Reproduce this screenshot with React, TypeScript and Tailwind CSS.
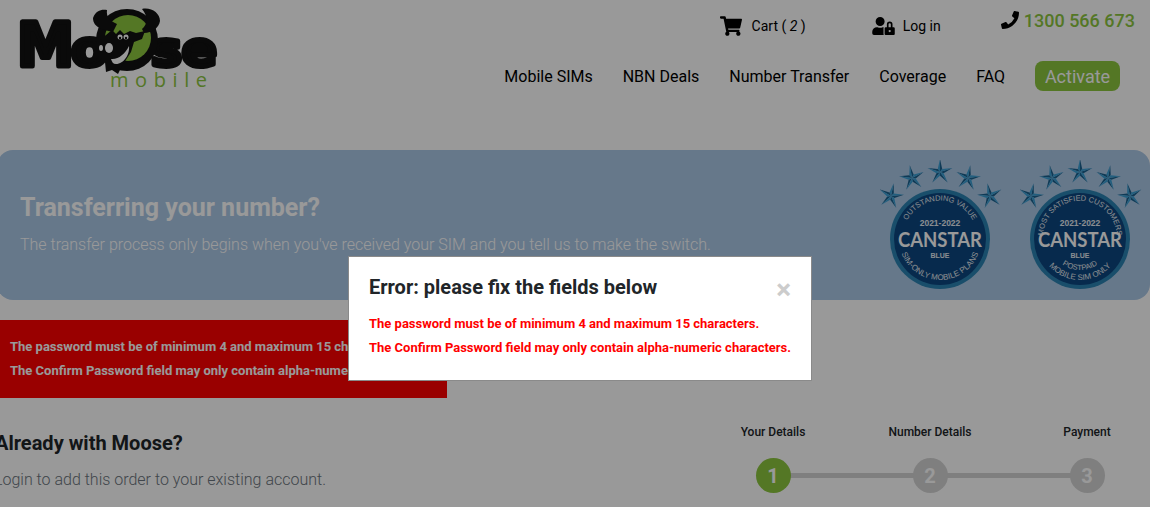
import { FaShoppingCart, FaUserLock, FaPhoneAlt } from 'react-icons/fa';

const MooseLogo = () => (
  <svg width="222" height="92" viewBox="0 0 222 92">
    {/* svg sits at x=14 y=4 on the page */}
    <g fontFamily="DejaVu Sans" fontWeight="700" fill="#111" stroke="#111" strokeWidth="5" strokeLinejoin="round">
      <text x="3" y="62" fontSize="60" textLength="57" lengthAdjust="spacingAndGlyphs">M</text>
      <text x="57" y="62" fontSize="50" textLength="37" lengthAdjust="spacingAndGlyphs">o</text>
      <text x="137" y="62" fontSize="48" textLength="66" lengthAdjust="spacingAndGlyphs">se</text>
    </g>
    {/* moose head */}
    <circle cx="113" cy="36" r="31" fill="#111" />
    <circle cx="114" cy="34" r="23" fill="#8cc63f" />
    <path d="M99 28 C90 26 79 24 79 14 C82 6 88 5 93 6 C92 13 96 17 103 20 Z" fill="#111" />
    <path d="M128 25 C134 20 134 12 128 5 C137 3 146 9 146 17 C145 24 138 29 130 29 Z" fill="#111" />
    <path d="M92 31 L98 26 L102 30 L106 26 L110 30 L116 27 L122 29 L131 27 L128 35 L120 38 L117 48 L108 62 L104 70 L98 66 L92 68 L91 58 L81 50 L81 40 Z" fill="#111" />
    <ellipse cx="87" cy="44" rx="2" ry="3" fill="#fff" />
    <ellipse cx="95" cy="44" rx="4" ry="5" fill="#fff" />
    <circle cx="106" cy="33" r="2.5" fill="#fff" />
    <circle cx="112" cy="33" r="2.5" fill="#fff" />
    <circle cx="106" cy="34" r="1.2" fill="#111" />
    <circle cx="112" cy="34" r="1.2" fill="#111" />
    <path d="M97 55 C104 56 111 50 115 42 C116 50 110 60 102 60 C99 60 98 58 97 55 Z" fill="#fff" />
    <text x="96" y="83" fontFamily="Open Sans" fontSize="20" textLength="97" fill="#8cc63f">mobile</text>
  </svg>
);

// five-pointed star built from light and dark facets
const Star = ({ x, y, rot }: { x: number; y: number; rot: number }) => {
  const pt = (r: number, a: number) => `${(r * Math.sin(a)).toFixed(2)} ${(-r * Math.cos(a)).toFixed(2)}`;
  const tips = [0, 1, 2, 3, 4];
  const step = (Math.PI * 2) / 5;
  return (
    <g transform={`translate(${x} ${y}) rotate(${rot})`}>
      {tips.map(i => (
        <g key={i}>
          <path d={`M0 0 L${pt(13, i * step)} L${pt(3.8, i * step + step / 2)} Z`} fill="#1a628f" />
          <path d={`M0 0 L${pt(13, i * step)} L${pt(3.8, i * step - step / 2)} Z`} fill="#3a9fd4" />
        </g>
      ))}
    </g>
  );
};

const Badge = ({ id, top, bottom, postpaid }: { id: string; top: string; bottom: string; postpaid?: boolean }) => (
  <svg width="122" height="130" viewBox="0 0 122 130">
    <Star x={11} y={36} rot={12} />
    <Star x={32} y={18} rot={-10} />
    <Star x={60} y={12} rot={0} />
    <Star x={88} y={18} rot={10} />
    <Star x={110} y={36} rot={-12} />
    <circle cx="60" cy="79" r="50" fill="#2b83b2" />
    <circle cx="60" cy="79" r="46" fill="#0d4680" />
    <defs>
      <path id={`${id}-t`} d="M25.5 91 A37 37 0 1 1 94.5 91" />
      <path id={`${id}-b`} d="M19 79 A41 41 0 0 0 101 79" />
      <path id={`${id}-c`} d="M29 79 A31 31 0 0 0 91 79" />
    </defs>
    <g fontFamily="Liberation Sans" fill="#e6ecf2">
      <text fontSize="7.5">
        <textPath href={`#${id}-t`} startOffset="50%" textAnchor="middle">{top}</textPath>
      </text>
      <text x="60" y="66" fontSize="8.5" fontWeight="700" textAnchor="middle">2021-2022</text>
      <text x="60" y="87" fontFamily="Lato" fontSize="20" fontWeight="700" textAnchor="middle" fill="#ffffff" textLength="84" lengthAdjust="spacingAndGlyphs">CANSTAR</text>
      <text x="60" y="98" fontSize="7" fontWeight="700" textAnchor="middle">BLUE</text>
      {postpaid && (
        <text fontSize="7.5">
          <textPath href={`#${id}-c`} startOffset="50%" textAnchor="middle">POSTPAID</textPath>
        </text>
      )}
      <text fontSize="8">
        <textPath href={`#${id}-b`} startOffset="50%" textAnchor="middle">{bottom}</textPath>
      </text>
    </g>
  </svg>
);

const navItems = ['Mobile SIMs', 'NBN Deals', 'Number Transfer', 'Coverage', 'FAQ'];

const steps = [
  { n: 1, label: 'Your Details', active: true },
  { n: 2, label: 'Number Details' },
  { n: 3, label: 'Payment' },
];

const errors = [
  'The password must be of minimum 4 and maximum 15 characters.',
  'The Confirm Password field may only contain alpha-numeric characters.',
];

export default function App() {
  return (
    <div className="relative h-[507px] w-[1150px] overflow-hidden bg-white font-['Roboto',sans-serif] text-[#212529]">
      <header className="flex h-[150px] items-start justify-between">
        <div className="ml-[14px] mt-[4px]">
          <MooseLogo />
        </div>
        <div className="mr-[15px] flex flex-col items-end">
          <div className="flex h-[46px] items-start">
            <div className="mt-[14px] flex items-center text-black">
              <FaShoppingCart className="h-[20px] w-[22px]" />
              <span className="ml-[10px] pt-[2px] text-[14px]">
                Cart ( <span className="italic">2</span> )
              </span>
            </div>
            <div className="ml-[66px] mt-[14px] flex items-center text-black">
              <FaUserLock className="h-[18px] w-[23px]" />
              <span className="ml-[8px] pt-[2px] text-[14px]">Log in</span>
            </div>
            <div className="ml-[60px] mt-[7px] flex items-center">
              <FaPhoneAlt className="h-[18px] w-[18px] -translate-y-[1px] -scale-x-100 text-black" />
              <span className="ml-[5px] text-[18px] font-medium text-[#8cc63f]">1300 566 673</span>
            </div>
          </div>
          <nav className="mr-[15px] mt-[15px] flex items-center gap-[30px] text-[16px] text-black">
            {navItems.map(item => (
              <a key={item} className="pt-[2px]">{item}</a>
            ))}
            <a className="flex h-[30px] w-[85px] items-center justify-center rounded-[8px] bg-[#8cc63f] text-[18px] text-white">
              Activate
            </a>
          </nav>
        </div>
      </header>

      <section className="-ml-[3px] flex h-[150px] items-center justify-between rounded-[16px] bg-[#abc8e6]">
        <div className="ml-[23px]">
          <h2 className="text-[25px] font-bold leading-[29px] text-white">Transferring your number?</h2>
          <p className="mt-[11px] text-[16px] font-light leading-[24px] text-white">
            The transfer process only begins when you've received your SIM and you tell us to make the switch.
          </p>
        </div>
        <div className="mr-[8px] flex gap-[18px]">
          <Badge id="a" top="OUTSTANDING VALUE" bottom="SIM-ONLY MOBILE PLANS" />
          <Badge id="b" top="MOST SATISFIED CUSTOMERS" bottom="MOBILE SIM ONLY" postpaid />
        </div>
      </section>

      <div className="mt-[20px] flex h-[78px] w-[447px] flex-col justify-center gap-[6px] bg-[#ff0000] pl-[10px] text-[13px] font-bold leading-[18px] text-white">
        {errors.map(e => (
          <p key={e} className="whitespace-nowrap">{e}</p>
        ))}
      </div>

      <div className="flex items-start justify-between">
        <div className="-ml-[6px] mt-[33px]">
          <h3 className="ml-[1px] text-[20px] font-bold leading-[24px] text-[#212529]">Already with Moose?</h3>
          <p className="mt-[13px] text-[16px] font-light leading-[24px] text-[#6c757d]">Login to add this order to your existing account.</p>
        </div>
        <div className="relative mr-[45px] mt-[26px] flex w-[350px] justify-between">
          <div className="absolute left-[18px] right-[18px] top-[49px] h-[5px] bg-[#d4d4d4]" />
          {steps.map(s => (
            <div key={s.n} className="relative flex w-[36px] flex-col items-center">
              <span className="whitespace-nowrap text-[12px] font-medium leading-[16px]">{s.label}</span>
              <span
                className={
                  s.active
                    ? 'mt-[18px] flex h-[35px] w-[35px] items-center justify-center rounded-full bg-[#8cc63f] text-[20px] font-bold text-white'
                    : 'mt-[18px] flex h-[35px] w-[35px] items-center justify-center rounded-full bg-[#d4d4d4] text-[20px] font-bold text-white'
                }
              >
                {s.n}
              </span>
            </div>
          ))}
        </div>
      </div>

      {/* modal backdrop */}
      <div className="absolute inset-0 bg-black/40" />
      <div className="absolute left-[348px] top-[256px] h-[125px] w-[464px] border border-[#8a8a8a] bg-white pl-[20px] pt-[16px]">
        <div className="flex items-start justify-between pr-[20px]">
          <h4 className="text-[20px] font-bold leading-[28px] text-[#212529]">Error: please fix the fields below</h4>
          <span className="mt-[3px] text-[28px] font-bold leading-[28px] text-[#cccccc]">×</span>
        </div>
        <div className="mt-[11px] flex flex-col gap-[6px] text-[13px] font-bold leading-[18px] text-[#ff0000]">
          {errors.map(e => (
            <p key={e} className="whitespace-nowrap">{e}</p>
          ))}
        </div>
      </div>
    </div>
  );
}
